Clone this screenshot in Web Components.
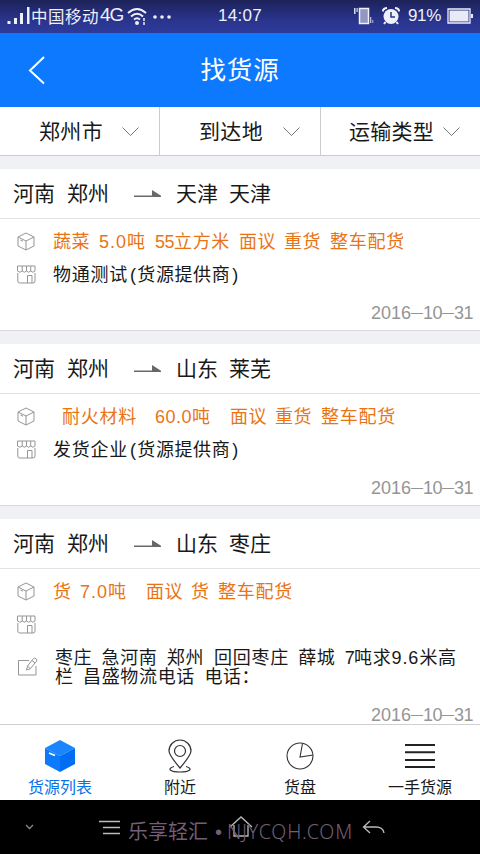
<!DOCTYPE html>
<html lang="zh-CN"><head><meta charset="utf-8"><title>找货源</title>
<style>html,body{margin:0;padding:0}body{width:480px;height:854px;overflow:hidden;background:#f0f1f6;font-family:"Liberation Sans","Noto Sans CJK SC",sans-serif;color:#191919}</style></head>
<body><cargo-app></cargo-app>
<script>
const define = (name, html, setup) => customElements.define(name, class extends HTMLElement {
  constructor(){ super(); this.attachShadow({mode:'open'}).innerHTML = html; }
  connectedCallback(){ if (setup) setup(this, this.shadowRoot); }
});

/* Inline text run: w = advance width to fill, g = space before it. */
define('fit-text', `<style>:host{display:block;flex:none;white-space:pre;line-height:var(--run-line,1.1)}span{display:inline-block;white-space:pre}</style><span></span>`, (el, r) => {
  const s = r.querySelector('span'); s.textContent = el.getAttribute('text');
  const w = +el.getAttribute('w'), n = [...s.textContent].length;
  el.style.marginLeft = (el.getAttribute('g') || 0) + 'px';
  if (w) { el.style.width = w + 'px'; s.style.letterSpacing = (w - s.getBoundingClientRect().width) / n + 'px'; }
});
const T = (text, w, g = 0) => `<fit-text text="${text}" w="${w}" g="${g}"></fit-text>`;

const icons = {
  box:'<path d="M9 1 17 5V14L9 18 1 14V5ZM1 5 9 9 17 5M9 9V18M3.5 8 6 9.2"/>',
  shop:'<path d="M.5 1H18V6Q16 8.5 13.7 6Q11.5 8.5 9.5 6Q7.2 8.5 5.2 6Q3 8.5 .5 6ZM5.2 1V6M9.5 1V6M13.7 1V6M.8 8V16Q.8 18 2.800 18H16Q18 18 18 16V8M10.5 18V10.5H15V18"/>',
  edit:'<path d="M12 3.5H1.500V18H19V9M9.5 13 10.5 9 16.500 1.500Q17.500 .5 19 1.700T19.500 4.200L13.300 11.700ZM15 3.500 18 6M10.500 9 13.300 11.700"/>'
};
define('line-icon', `<style>:host{display:block;width:20px;height:19px;flex:none}svg{display:block;overflow:visible}</style><svg width="20" height="19" fill="none" stroke="#959595" stroke-width="1"></svg>`,
  (el,r)=>{ r.querySelector('svg').innerHTML = icons[el.getAttribute('name')]; });

define('status-bar', `<style>:host{display:flex;box-sizing:border-box;height:33px;padding:0 5px 2px 7px;align-items:center;background:linear-gradient(#1d2258,#29348c 60%,#2e3b9a);color:#eef0fa;font-size:17px}
svg{display:block;flex:none}.time{font-size:17px;margin-top:1px}.net{font-size:19px}.op{font-size:16.500px;padding-top:3px}</style>
<svg width="24" height="20" viewBox="0 1 24 20" fill="#eef0fa"><path d="M.5 16h3v3H.5zM7 13h3v6H7zM13 8h3v11h-3zM20 2h2.500v17h-2.500z"/></svg>
<span class="op">${T('中国移动',68)}</span><span class="net">${T('4G',23,1)}</span>
<svg width="20" height="20" viewBox="0 0 20 20" style="margin-left:4px" fill="none" stroke="#eef0fa" stroke-width="2"><path d="M1 7Q10-1 19 7M4 10.5Q10 5 16 10.5M7 13.5Q10 11 13 13.5"/><circle cx="10" cy="17" r="2" fill="#eef0fa" stroke="none"/><path d="M17 12v3M17 16v3" stroke-width="1.5"/></svg>
<svg width="18" height="6" style="margin-left:6px;margin-top:2px" fill="#eef0fa"><circle cx="2" cy="3" r="1.8"/><circle cx="9" cy="3" r="1.8"/><circle cx="16" cy="3" r="1.8"/></svg>
<span class="time">${T('14:07',44,47)}</span>
<svg width="20" height="18" style="margin-left:92px"><path d="M0 1h1.5v6H0zM2.5 1h1.2v4H2.500z" fill="#d9dbea"/><path d="M5.500 1.500h9v15h-9z" fill="#9298bf" stroke="#eef0fa" stroke-width="1.5"/><path d="M16 10h1.300v6H16zM18.300 13h1v3h-1z" fill="#b8bcd8"/></svg>
<svg width="18" height="18" style="margin-left:8px"><circle cx="9" cy="9.500" r="7.500" fill="#eef0fa"/><path d="M.7 4.500Q1.500 1 5 1M17.300 4.500Q16.500 1 13 1M3.500 15 2 17M14.500 15l1.500 2" stroke="#eef0fa" stroke-width="2" fill="none"/><path d="M9 5v5h4" stroke="#29348c" stroke-width="1.500" fill="none"/></svg>
<span class="time">${T('91%',33,8)}</span>
<svg width="27" height="16" style="margin-left:6px"><path d="M1 1h22v14H1z" fill="none" stroke="#eef0fa" stroke-width="1.300"/><path d="M2.500 2.500h19v11h-19zM24 6h2v4h-2z" fill="#e8eaf6"/></svg>`);

define('title-bar', `<style>:host{display:grid;box-sizing:border-box;grid-template-columns:80px 1fr 80px;height:74px;align-items:center;justify-items:center;background:#0d79fe;color:#fff;font-size:25.500px}svg{margin-right:6px}</style>
<svg width="18" height="30" fill="none" stroke="#fff" stroke-width="2"><path d="M16 2 2 15.500 16 28.500"/></svg>${T('找货源',79)}`);

define('filter-tab', `<style>:host{display:flex;box-sizing:border-box;align-items:center;justify-content:flex-end;padding:1px 20px 0 0;border-right:1px solid #ccc;font-size:21px}:host(:last-child){border:0}svg{flex:none}</style><slot></slot><svg width="17" height="10" fill="none" stroke="#777"><path d="M.5.5 8.500 8.500 16.500.5"/></svg>`,
 (el,r)=>{ r.querySelector('svg').style.marginLeft = el.getAttribute('gap')+'px'; });
define('filter-bar', `<style>:host{display:grid;grid-template-columns:160px 161px 159px;height:48px;background:#fff;border-bottom:1px solid #ccc}</style>
<filter-tab gap="19">${T('郑州市',64)}</filter-tab><filter-tab gap="20">${T('到达地',64)}</filter-tab><filter-tab gap="9">${T('运输类型',85)}</filter-tab>`);

define('cargo-card', `<style>:host{display:flex;flex-direction:column;box-sizing:border-box;height:162px;background:#fff;border-bottom:1px solid #d8d9dc;font-size:18px;flex:none}
header{display:flex;align-items:center;height:49px;flex:none;padding-left:13px;border-bottom:1px solid #e3e3e3;font-size:21px}
.body{display:grid;grid-template-columns:36px 1fr;grid-auto-rows:33px;padding:6px 0 0 17px;align-items:center}
.row{display:flex;align-items:center;padding-top:2px}.goods{color:#e97416}
.note,.note-icon{display:none}.date{display:flex;align-items:center;margin:auto 7px 7px auto;color:#959595;font-size:18px;height:18px}.date i{font-style:normal;font-size:12px}
:host([note]){height:230px}:host([note]) .body{grid-template-rows:33px 33px 51px}:host([note]) .note,:host([note]) .note-icon{display:block}
:host([note]) .date{margin-top:15px;margin-bottom:auto}</style>
<header><slot name="route"></slot></header>
<div class="body"><line-icon name="box"></line-icon><div class="row goods"><slot name="goods"></slot></div>
<line-icon name="shop"></line-icon><div class="row"><slot name="owner"></slot></div>
<line-icon class="note-icon" name="edit"></line-icon><div class="note"><slot name="note"></slot></div></div>
<div class="date">${T('2016',40)}<i>${T('—',12)}</i>${T('10',19)}<i>${T('—',12)}</i>${T('31',19)}</div>`);
const card = (a,b,goods,owner,note='') => `<cargo-card ${note?'note':''}><div slot="route" class="row">${T('河南',42)}${T('郑州',42,12)}<svg width="27" height="10" style="margin:0 15px 0 25px"><path d="M0 6.500H18V1L27 6.800V8H0Z" fill="#686868"/></svg>${T(a,42)}${T(b,42,11)}</div><div slot="goods" class="row">${goods}</div><div slot="owner" class="row">${owner}</div><div slot="note">${note}</div></cargo-card>`;
const owner = n => T(n,75)+T('(',7.3,2)+T('货源提供商',93)+T(')',7.3,2);

define('cargo-list', `<style>:host{display:flex;flex-direction:column;gap:13px;padding-top:13px;height:568px;box-sizing:border-box;overflow:hidden;background:#f0f1f5}.row{display:flex;align-items:center}.line{--run-line:18px;font-size:18px;height:19px;margin-left:2px}.line:first-child{padding-top:2px}</style>`+
 card('天津','天津',T('蔬菜',37)+T('5.0',28,9)+T('吨',19)+T('55',19,9)+T('立方米',56)+T('面议',37,9)+T('重货',37,8)+T('整车配货',75,9),owner('物通测试'))+
 card('山东','莱芜',T('耐火材料',75,9)+T('60.0',37,18)+T('吨',19)+T('面议',37,19)+T('重货',37,8)+T('整车配货',75,9),owner('发货企业'))+
 card('山东','枣庄',T('货',18)+T('7.0',28,9)+T('吨',19)+T('面议',37,19)+T('货',18,8)+T('整车配货',75,9),'',
 `<div class="row line">${T('枣庄',37)+T('急河南',56,9.500)+T('郑州',37.300,9.300)+T('回回枣庄',75,9.800)+T('薛城',37.300,9.300)+T('7',9.300,9.300)+T('吨求',37.300)+T('9.6',28)+T('米高',37.300)}</div><div class="row line">${T('栏',18)+T('昌盛物流电话',112,10)+T('电话',37,9.500)+T('：',18)}</div>`));

define('tab-item', `<style>:host{display:flex;flex-direction:column;align-items:center;font-size:16px}:host([active]){color:#0872e8}.i{height:40px;display:grid;place-items:center;margin-top:11px}.l{margin-top:3px}</style><div class="i"><slot></slot></div><div class="l"></div>`,
 (el,r)=>{const s=el.getAttribute('label');r.querySelector('.l').innerHTML=T(s,s.length*16);});
define('tab-bar', `<style>:host{display:grid;grid-template-columns:repeat(4,120px);height:75px;background:#fff;border-top:1px solid #d0d0d0}svg{display:block}</style>
<tab-item active label="货源列表"><svg width="32" height="34"><path d="M16 1 31 9 16 17 1 9Z" fill="#1a85ff"/><path d="M1 9 16 17V33L1 25Z" fill="#0c7afa"/><path d="M31 9V25L16 33V17Z" fill="#006ef2"/><path d="M5 14 11 16.500" stroke="#fff" stroke-width="1.600"/></svg></tab-item>
<tab-item label="附近"><svg width="24" height="34" fill="none" stroke="#333" stroke-width="1.200"><path d="M12 29Q1 16 1 12A11 11 0 0 1 23 12Q23 16 12 29Z"/><circle cx="12" cy="12" r="5.500"/><path d="M6 27.500C-2 30 3 33 12 33S26 30 18 27.500"/></svg></tab-item>
<tab-item label="货盘"><svg width="28" height="28" fill="none" stroke="#333" stroke-width="1.100"><circle cx="14" cy="14" r="13"/><path d="M16.500 1.500 14 15 27 13"/></svg></tab-item>
<tab-item label="一手货源"><svg width="30" height="26" stroke="#222" stroke-width="2"><path d="M0 2H30M0 9.300H30M0 17H30M0 24H30"/></svg></tab-item>`);

define('system-nav', `<style>:host{display:grid;position:relative;height:54px;background:#000}svg{grid-area:1/1}.mark{position:absolute;left:128px;top:21px;display:flex;align-items:center;color:#725f77;font-size:20px}.latin{font-family:"Noto Sans",sans-serif;font-weight:300;font-size:19.500px}</style>
<svg width="480" height="54" fill="none" stroke="#bbb" stroke-width="1.300"><path d="M26 25 29.500 28.500 33 25" stroke="#888"/><path d="M99 21.500H120M103 27.500H120M103 33.500H120" stroke-width="1.500"/><path d="M230 27 241 17 252 27M234 25V36H248V25"/><path d="M370 21 363.500 27 370 33M364 27H376Q383 27 384 33"/></svg>
<div class="mark">${T('乐享轻汇',80)}${T('•',8,7)}<span class="latin">${T('NJYCQH.COM',126,4)}</span></div>`);

define('cargo-app', `<style>:host{display:flex;flex-direction:column;width:480px;height:854px;overflow:hidden}</style>
<status-bar></status-bar><title-bar></title-bar><filter-bar></filter-bar><cargo-list></cargo-list><tab-bar></tab-bar><system-nav></system-nav>`);
</script></body></html>
